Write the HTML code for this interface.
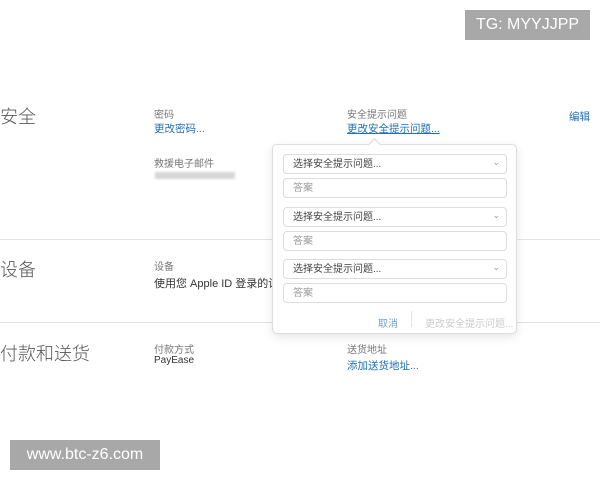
<!DOCTYPE html>
<html><head><meta charset="utf-8"><style>
*{margin:0;padding:0;box-sizing:border-box}
body{width:600px;height:480px;background:#fff;position:relative;overflow:hidden;font-family:"Liberation Sans","Noto Sans CJK SC",sans-serif;color:#333}
.a{position:absolute;white-space:nowrap}
.h{font-size:18px;color:#555;font-weight:300}
.l{font-size:10px;color:#777}
.lk{font-size:10.5px;color:#1f6fb5}
.t{font-size:11px;color:#333}
.hr{position:absolute;left:0;width:600px;height:1px;background:#e3e3e3}
.pop{position:absolute;left:272px;top:144px;width:245px;height:190px;background:#fff;border:1px solid #ddd;border-radius:5px;box-shadow:0 3px 10px rgba(0,0,0,.1)}
.f{position:absolute;left:10px;width:224px;height:20px;border:1px solid #ddd;border-radius:4px;font-size:10px;padding-left:9px;line-height:20px}
.sel{color:#444}
.ans{color:#999}
.sel:after{content:"⌄";position:absolute;right:6px;top:-3px;color:#999;font-size:9px}
.box{position:absolute;background:#a8a8a8;color:#fff;font-size:16px;text-align:center}
</style></head><body>
<div class="a h" style="left:0;top:103px">安全</div>
<div class="a l" style="left:154px;top:106px">密码</div>
<div class="a lk" style="left:154px;top:121px">更改密码...</div>
<div class="a l" style="left:154px;top:155px">救援电子邮件</div>
<div class="a" style="left:155px;top:172px;width:80px;height:7px;background:#d6d6d6;filter:blur(1px)"></div>
<div class="a l" style="left:347px;top:106px">安全提示问题</div>
<div class="a lk" style="left:347px;top:121px;text-decoration:underline">更改安全提示问题...</div>
<div class="a lk" style="left:569px;top:109px">编辑</div>
<div class="hr" style="top:239px"></div>
<div class="a h" style="left:0;top:256px">设备</div>
<div class="a l" style="left:154px;top:258px">设备</div>
<div class="a t" style="left:154px;top:275px">使用您 Apple ID 登录的设</div>
<div class="hr" style="top:322px"></div>
<div class="a h" style="left:0;top:340px">付款和送货</div>
<div class="a l" style="left:154px;top:341px">付款方式</div>
<div class="a t" style="left:154px;top:355px;font-size:10px">PayEase</div>
<div class="a l" style="left:347px;top:341px">送货地址</div>
<div class="a lk" style="left:347px;top:358px">添加送货地址...</div>
<div class="pop">
<div class="a" style="left:97px;top:-5px;width:9px;height:9px;background:#fff;border-left:1px solid #ddd;border-top:1px solid #ddd;transform:rotate(45deg)"></div>
<div class="f sel" style="top:9px">选择安全提示问题...</div>
<div class="f ans" style="top:33px">答案</div>
<div class="f sel" style="top:62px">选择安全提示问题...</div>
<div class="f ans" style="top:86px">答案</div>
<div class="f sel" style="top:114px">选择安全提示问题...</div>
<div class="f ans" style="top:138px">答案</div>
<div class="a" style="left:105px;top:170px;font-size:10px;color:#6fa0c9">取消</div>
<div class="a" style="left:138px;top:166px;width:1px;height:16px;background:#e3e3e3"></div>
<div class="a" style="left:152px;top:170px;font-size:10px;color:#ccc">更改安全提示问题...</div>
</div>
<div class="box" style="left:465px;top:10px;width:125px;height:30px;line-height:30px">TG: MYYJJPP</div>
<div class="box" style="left:10px;top:440px;width:150px;height:30px;line-height:30px">www.btc-z6.com</div>
</body></html>
